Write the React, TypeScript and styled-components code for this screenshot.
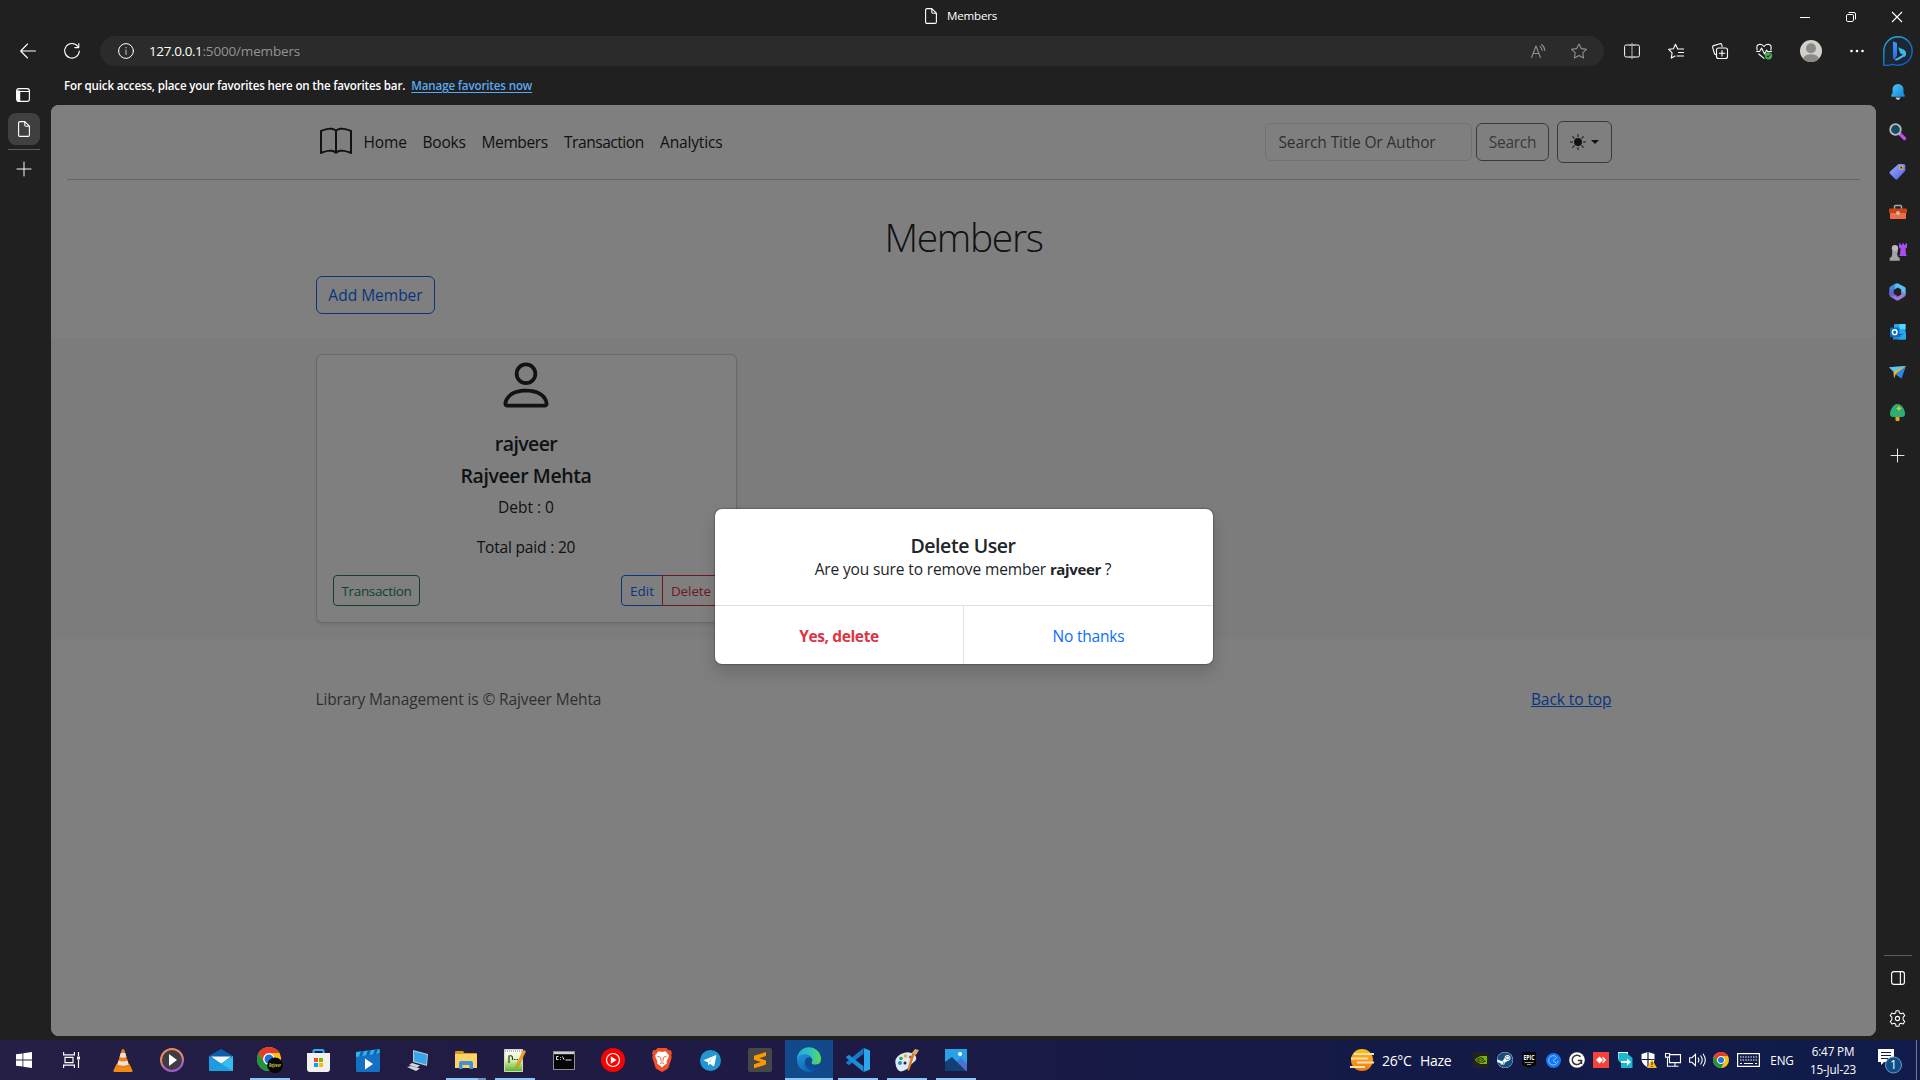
import React from "react";
import styled, { createGlobalStyle, css } from "styled-components";
import { BsBook, BsPerson, BsSunFill, BsStar } from "react-icons/bs";
import { FaSteam } from "react-icons/fa";
import { SiNvidia } from "react-icons/si";

const Global = createGlobalStyle`
  * { box-sizing: border-box; }
  body { margin: 0; background: #202020; font-family: "Open Sans", "Noto Sans", sans-serif; overflow: hidden; }
  svg { display: block; flex: none; overflow: visible; }
`;

/* ---------- window ---------- */
const Window = styled.div`
  width: 1920px; height: 1080px; display: flex; flex-direction: column;
  background: #202020; color: #fff; overflow: hidden; white-space: nowrap;
`;
const TitleBar = styled.header`
  height: 33px; display: grid; grid-template-columns: 925px 1fr auto; align-items: center;
`;
const WindowTitle = styled.div`
  grid-column: 2; display: flex; align-items: center; gap: 10px; padding-bottom: 1px;
  font-size: 11.6px; line-height: 16px; letter-spacing: -0.2px;
`;
const WindowControls = styled.div`
  display: flex; gap: 36px; padding-right: 18px; align-items: center;
`;
const Toolbar = styled.div`
  height: 36px; padding: 3px 7px 3px 20px; display: flex; align-items: center;
`;
const ToolGroup = styled.div<{ $gap: number; $right?: number }>`
  display: flex; align-items: center; gap: ${(p) => p.$gap}px; margin-right: ${(p) => p.$right ?? 0}px;
`;
const AddressBar = styled.div`
  width: 1504px; height: 30px; border-radius: 15px; background: #2b2b2b; flex: none;
  display: flex; align-items: center; padding: 0 17px 0 18px; margin-right: 20px;
`;
const Url = styled.div`
  flex: 1; margin-left: 15px; font-size: 13.5px; letter-spacing: -0.39px;
  span { color: #949494; letter-spacing: -0.16px; }
`;
const Body = styled.div`
  height: 971px; display: flex;
`;
const LeftRail = styled.nav`
  width: 51px; display: flex; flex-direction: column; align-items: flex-start; padding: 15px 0 0 8px;
`;
const RailItem = styled.div<{ $active?: boolean; $h?: number }>`
  width: 32px; height: ${(p) => p.$h ?? 32}px; border-radius: 8px; display: flex; align-items: center; justify-content: center;
  ${(p) => p.$active && css`background: #404040;`}
  &:first-child { margin-bottom: 7px; padding-right: 2px; }
`;
const RailRule = styled.div`
  width: 32px; height: 1px; background: #5c5c5c; margin: 4px 0 3px;
`;
const Center = styled.div`
  width: 1825px; display: flex; flex-direction: column;
`;
const FavoritesBar = styled.div`
  height: 36px; padding: 9px 13px 0; display: flex; gap: 6px; font-size: 11.6px; line-height: 16px; font-weight: 600; letter-spacing: -0.178px;
  a { color: #5aa9f0; text-decoration: underline; text-underline-offset: 2px; letter-spacing: -0.15px; }
`;
const RightRail = styled.nav`
  width: 44px; display: flex; flex-direction: column; align-items: center; padding: 3px 1px 2px 0;
`;
const RightItem = styled.div<{ $h?: number }>`
  height: ${(p) => p.$h ?? 40}px; display: flex; align-items: center; justify-content: center;
`;
const Spacer = styled.div`flex: 1;`;
const RightRule = styled.div`width: 28px; height: 1px; background: #5c5c5c; margin-bottom: 2px;`;

/* ---------- page ---------- */
const Page = styled.main`
  position: relative; height: 931px; border-radius: 8px; overflow: hidden; background: #fff; color: #212529;
  font-size: 15.5px; line-height: 24px; display: flex; flex-direction: column;
`;
const Container = styled.div`
  width: 1320px; margin: 0 auto; padding: 0 12px;
`;
const PageHeader = styled(Container)`
  height: 74px; display: flex; align-items: center; padding-left: 16px;
`;
const NavLink = styled.a<{ $track: number; $w: number }>`
  width: ${(p) => p.$w}px; letter-spacing: ${(p) => p.$track}px;
`;
const Nav = styled.nav`
  display: flex; gap: 16px; margin-left: 12px; flex: 1;
`;
const SearchField = styled.div`
  width: 207px; height: 38px; padding: 6px 12px 6px 13px; border: 1px solid #dee2e6; border-radius: 6px;
  color: rgba(33, 37, 41, 0.75); letter-spacing: -0.14px; margin-right: 4px;
`;
const Button = styled.button<{ $color: string; $small?: boolean; $track?: number; $w: number; $h?: number; $side?: "left" | "right" }>`
  width: ${(p) => p.$w}px; height: ${(p) => p.$h ?? (p.$small ? 31 : 38)}px; padding: ${(p) => (p.$small ? "1px 0 0 1px" : "0 0 0 1px")};
  display: flex; align-items: center; justify-content: center; gap: 5px;
  border: 1px solid ${(p) => p.$color}; border-radius: ${(p) => (p.$small ? 4 : 6)}px; background: transparent;
  color: ${(p) => p.$color}; font-family: inherit; font-size: ${(p) => (p.$small ? 13.5 : 15.5)}px; line-height: 21px;
  letter-spacing: ${(p) => p.$track ?? 0}px;
  ${(p) => p.$side === "left" && css`border-top-right-radius: 0; border-bottom-right-radius: 0;`}
  ${(p) => p.$side === "right" && css`border-top-left-radius: 0; border-bottom-left-radius: 0; margin-left: -1px;`}
`;
const ThemeButton = styled(Button)`margin-left: 8px; color: #212529;`;
const Caret = styled.i`
  border: 4.5px solid transparent; border-top-color: #212529; border-bottom: 0;
`;
const Rule = styled.div`height: 1px; margin: 0 16px; background: #c8c9ca; flex: none;`;
const Heading = styled.h1`
  margin: 33px 0 15px; text-align: center; font-weight: 300; font-size: 39px; line-height: 48px; letter-spacing: -1.35px;
`;
const Band = styled.section`
  height: 301px; margin-top: 24px; padding: 16px 0; background: #f8f9fa; flex: none;
`;
const Card = styled.article`
  width: 421px; height: 269px; display: flex; flex-direction: column; align-items: center; background: #fff;
  border: 1px solid rgba(0, 0, 0, 0.175); border-radius: 6px; box-shadow: 0 2px 4px rgba(0, 0, 0, 0.075);
`;
const CardTitle = styled.h5<{ $track: number }>`
  margin: 0 0 7px; padding-top: 1px; font-size: 19.5px; font-weight: 600; line-height: 24px; letter-spacing: ${(p) => p.$track}px;
`;
const CardBody = styled.div`
  width: 100%; padding: 16px; display: flex; flex-direction: column; align-items: center;
`;
const CardText = styled.p<{ $track?: number }>`
  margin: 0 0 16px; letter-spacing: ${(p) => p.$track ?? 0}px;
`;
const CardActions = styled.div`
  width: 100%; display: flex; justify-content: space-between;
`;
const ButtonGroup = styled.div`display: flex;`;
const Footer = styled(Container)`
  padding-top: 48px; display: flex; justify-content: space-between; color: rgba(33, 37, 41, 0.75); letter-spacing: -0.13px;
  a { color: #0d6efd; text-decoration: underline; letter-spacing: -0.08px; }
`;
const Backdrop = styled.div`
  position: absolute; inset: 0; background: rgba(0, 0, 0, 0.5);
`;
const Dialog = styled.div`
  position: absolute; left: 664px; top: 404px; width: 498px; height: 155px; display: flex; flex-direction: column;
  background: #fff; border-radius: 7px; box-shadow: 0 0 1px 1px rgba(0, 0, 0, 0.2), 0 8px 16px rgba(0, 0, 0, 0.17);
`;
const DialogBody = styled.div`
  height: 97px; padding: 25px 2px 22px 0; text-align: center; border-bottom: 1px solid #dee2e6; letter-spacing: -0.14px; line-height: 23px;
  b { font-size: 15px; letter-spacing: -0.36px; }
`;
const DialogTitle = styled.h5`
  margin: 0; font-size: 19.5px; line-height: 24px; font-weight: 600; letter-spacing: -0.42px;
`;
const DialogActions = styled.div`
  flex: 1; display: grid; grid-template-columns: 1fr 1fr; align-items: stretch;
`;
const DialogAction = styled.div<{ $danger?: boolean }>`
  display: flex; align-items: center; justify-content: center; padding-top: 1px;
  color: ${(p) => (p.$danger ? "#dc3545" : "#0d6efd")}; font-weight: ${(p) => (p.$danger ? 700 : 400)};
  letter-spacing: ${(p) => (p.$danger ? -0.38 : -0.2)}px;
  ${(p) => p.$danger && css`border-right: 1px solid #dee2e6;`}
`;

/* ---------- taskbar ---------- */
const Taskbar = styled.footer`
  height: 40px; display: flex; align-items: center;
  background: linear-gradient(90deg, #251f46 0%, #201c43 22%, #1c1a45 45%, #131a48 75%, #111c4a 100%);
`;
const System = styled.div`display: flex; margin-right: 3px;`;
const Apps = styled.div`display: flex; gap: 1px; flex: 1;`;
const App1 = styled.div<{ $state?: "open" | "stack" | "active" }>`
  width: 48px; height: 40px; display: grid; place-items: center; border-bottom: 2px solid transparent;
  padding: 2px 1px 0 0;
  ${(p) => p.$state === "active" && css`background: #11498b; border-bottom-color: #8fc5f5;`}
  ${(p) => p.$state === "open" && css`background: linear-gradient(#8fc5f5, #8fc5f5) 4px 38px / 40px 2px no-repeat border-box;`}
  ${(p) => p.$state === "stack" && css`background: linear-gradient(90deg, #8fc5f5 32px, #6f92b8 32px) 4px 38px / 40px 2px no-repeat border-box;`}
`;
const Weather = styled.div`
  display: flex; align-items: center; width: 119px; font-size: 14px; letter-spacing: -0.3px;
  span:nth-of-type(1) { width: 38px; margin-left: 8px; letter-spacing: -0.35px; }
`;
const TrayIcon = styled.div<{ $w?: number }>`
  width: ${(p) => p.$w ?? 24}px; display: flex; justify-content: center;
`;
const TrayText = styled.div<{ $w: number }>`
  width: ${(p) => p.$w}px; text-align: center; font-size: 11.7px; line-height: 18px; letter-spacing: -0.15px; padding-bottom: 1px;
`;
const ShowDesktop = styled.div`width: 4px; height: 40px; border-left: 1px solid #6d7693;`;

/* ---------- line icons ---------- */
type LineProps = { s?: number; c?: string; w?: number; children: React.ReactNode };
const Line = ({ s = 16, c = "#fff", w = 1.1, children }: LineProps) => (
  <svg width={s} height={s} viewBox="0 0 16 16" fill="none" stroke={c} strokeWidth={w} strokeLinecap="round" strokeLinejoin="round">{children}</svg>
);
const DocIcon = () => (
  <svg width="12" height="16" viewBox="0 0 12 16" fill="none" stroke="#fff" strokeWidth="1.1" strokeLinejoin="round">
    <path d="M2 .6h4.8L11.4 5.2V14a1.4 1.4 0 0 1-1.4 1.4H2A1.4 1.4 0 0 1 .6 14V2A1.4 1.4 0 0 1 2 .6zM6.8 .6V4a1.2 1.2 0 0 0 1.2 1.2h3.4" />
  </svg>
);
const BingIcon = () => (
  <svg width="30" height="30" viewBox="0 0 30 30">
    <defs>
      <linearGradient id="bo" x1="0" y1="0" x2="0.6" y2="1"><stop stopColor="#22b4cf" /><stop offset="1" stopColor="#1557cf" /></linearGradient>
      <linearGradient id="bb" x1="0" y1="0" x2="0" y2="1"><stop stopColor="#3b9cf5" /><stop offset="1" stopColor="#2467e8" /></linearGradient>
      <linearGradient id="bt" x1="1" y1="0" x2="0" y2="1"><stop stopColor="#37e0d8" /><stop offset="1" stopColor="#2f8ff5" /></linearGradient>
    </defs>
    <path d="M15 .8A14.2 14.2 0 1 1 10 28.3Q5 29.7.8 29.2V15A14.2 14.2 0 0 1 15 .8z" fill="#1b2733" stroke="url(#bo)" strokeWidth="1.4" />
    <path d="M10 5.5l4 1.5v12.2l-2.4 4.6q-1.6-.7-1.6-2.6z" fill="url(#bb)" />
    <path d="M15.3 11.3l6 2.7q2 1.3 1.7 4-.4 1.9-1.8 3.2-.2-2.2-2.2-2.9l-2-1z" fill="url(#bt)" />
    <path d="M11.5 23.8q1.6 1.2 3.6.2l6-3.4q1.8-1 1.8-3-.8.8-2.3 1l-5.4 2.8q-1.5.7-3.7 2.4z" fill="#4db6f5" />
  </svg>
);

/* ---------- sidebar icons ---------- */
const BellIcon = () => (
  <svg width="16" height="18" viewBox="0 0 16 18">
    <defs><linearGradient id="be" x2="1" y2="1"><stop stopColor="#4cc8f7" /><stop offset="1" stopColor="#1583d8" /></linearGradient></defs>
    <path d="M8 1a5.4 5.4 0 0 1 5.5 5.4V10l1.3 2.6c.3.7 0 1.2-.7 1.2H1.9c-.7 0-1-.5-.7-1.2L2.5 10V6.4A5.4 5.4 0 0 1 8 1z" fill="url(#be)" />
    <path d="M5.500 14.600h5Q9.800 17 8 17t-2.500-2.400z" fill="#c8c8c8" />
  </svg>
);
const LensIcon = () => (
  <svg width="17" height="17" viewBox="0 0 17 17">
    <path d="M11 11l4.500 4.500" stroke="#c44af0" strokeWidth="3.200" strokeLinecap="round" />
    <circle cx="6.500" cy="6.500" r="5.300" fill="#144a68" stroke="#b9b9b9" strokeWidth="1.800" />
  </svg>
);
const TagIcon = () => (
  <svg width="17" height="17" viewBox="0 0 17 17">
    <defs><linearGradient id="tg" x2="1" y2="1"><stop stopColor="#8fb6ff" /><stop offset="1" stopColor="#5a55e8" /></linearGradient></defs>
    <path d="M9.500 1h5a1.800 1.800 0 0 1 1.800 1.800v5L8.500 16a1.600 1.600 0 0 1-2.300 0L1 10.800a1.600 1.600 0 0 1 0-2.300z" fill="url(#tg)" />
    <circle cx="12.300" cy="4.700" r="1.700" fill="#32307c" stroke="#f3b91b" strokeWidth="1.100" />
  </svg>
);
const ToolboxIcon = () => (
  <svg width="18" height="16" viewBox="0 0 18 16">
    <path d="M5.500 5V2.500Q5.500 1.500 6.500 1.500h5q1 0 1 1V5" fill="none" stroke="#a9a9a9" strokeWidth="1.500" />
    <rect x="1" y="8" width="16" height="7" rx="1" fill="#ef6c47" />
    <rect x="0" y="4.500" width="18" height="4.500" rx="1" fill="#c94318" />
    <circle cx="9" cy="9" r="2" fill="#bdbdbd" />
  </svg>
);
const ChessIcon = () => (
  <svg width="18" height="18" viewBox="0 0 18 18">
    <path d="M10 .5h1.800v1.500h1.300V.5h1.900v1.500h1.200V.5H18v4l-1.500 1 .4 5.500.8 2h-7.400l.8-2 .4-5.500-1.500-1z" fill="#a94df2" />
    <circle cx="6" cy="5.300" r="3.200" fill="#b9b9b9" />
    <path d="M3 8h6v1.500H8l.7 4 2 1.500v2.700H.7V15l2-1.500.7-4H3z" fill="#a2a2a2" />
  </svg>
);
const M365Icon = () => (
  <svg width="17" height="18" viewBox="0 0 17 18">
    <path d="M5.800 1.300L8.700.2l7 3.700q1 .7 1 2v5.800l-4.500-3V6.600L8.800 4.500l-3 1.800z" fill="#55c3f0" />
    <path d="M8.700.2L6 1.500v4.800l-1.500.8v4.500l-2 1.700L.4 11.500V5.200q0-1.200 1-1.800L6.500.5q1.200-.6 2.200-.3z" fill="#4b83dc" />
    <path d="M.4 10.500q0 2.500 1.500 3.400l5.300 3.300q1.200.8 2.500 0l5.700-3.400q1.500-1 1.300-3.200l-4.500-2v2.800l-3.700 2.300-4-2.400z" fill="#9b7bd6" />
    <path d="M.4 8.500v3q.5 2.300 2.600 2l5.500-.6-4-2.300V7z" fill="#6a62d2" />
  </svg>
);
const OutlookIcon = () => (
  <svg width="16" height="16" viewBox="0 0 16 16">
    <rect x="4" y="0" width="11.500" height="10" rx="1" fill="#28a8ea" /><rect x="9.500" y="0" width="6" height="5" fill="#50d9ff" />
    <path d="M3 15.500V9l6 2.500L16 8v6.500q0 1-1 1z" fill="#1490df" /><path d="M8 15.500L16 8v6.500q0 1-1 1z" fill="#28a8ea" />
    <rect x="0" y="3.500" width="9.500" height="9.500" rx="1" fill="#0f6cbd" />
    <ellipse cx="4.700" cy="8.200" rx="2.300" ry="2.400" fill="none" stroke="#fff" strokeWidth="1.400" />
  </svg>
);
const DropIcon = () => (
  <svg width="17" height="13" viewBox="0 0 17 13">
    <path d="M0 1.200L17 0 12.500 12.500 8 9.500z" fill="#2b86e8" /><path d="M0 1.200L17 0 5 6z" fill="#58c8f2" />
    <path d="M4.500 5.800L17 0 7 7.500 5 12.500z" fill="#f6b91a" />
  </svg>
);
const TreeIcon = () => (
  <svg width="15" height="17" viewBox="0 0 15 17">
    <rect x="5.500" y="12" width="4" height="5" rx=".8" fill="#e8a11a" />
    <path d="M7.500 0C12 0 15 6 15 9.500S13 13 11 13H4c-2 0-4-.5-4-3.500S3 0 7.500 0z" fill="#2aae75" />
    <path d="M9 1.500l.9 2 2 .9-2 .9-.9 2-.9-2-2-.9 2-.9z" fill="#f6c12d" />
  </svg>
);

/* ---------- app icons ---------- */
const ChromeArt = () => (
  <>
    <circle cx="12" cy="12" r="12" fill="#fbc116" />
    <path d="M1.600 6A12 12 0 0 1 22.400 6H12a6 6 0 0 0-5.200 9z" fill="#e33b2e" />
    <path d="M1.600 6l5.200 9A6 6 0 0 0 17.200 15L12 24A12 12 0 0 1 1.600 6z" fill="#229342" />
    <circle cx="12" cy="12" r="5.700" fill="#fff" /><circle cx="12" cy="12" r="4.500" fill="#1a73e8" />
  </>
);
const ChromeIcon = () => <svg width="16" height="16" viewBox="0 0 24 24"><ChromeArt /></svg>;
const ProfileChromeIcon = () => (
  <svg width="26" height="26" viewBox="0 0 26 26">
    <ChromeArt />
    <circle cx="18" cy="18.300" r="7.800" fill="#050505" />
    <text x="18" y="20" fontSize="4.500" fontStyle="italic" fontWeight="700" textAnchor="middle" fill="#c4c832" textLength="12" lengthAdjust="spacingAndGlyphs">Rajveer</text>
  </svg>
);
const WindowsIcon = () => (
  <svg width="16" height="16" viewBox="0 0 16 16" fill="#fff"><path d="M0 2.300L6.500 1.400v6.200H0zM7.300 1.300L16 0v7.600H7.300zM0 8.400h6.500v6.200L0 13.700zM7.300 8.400H16V16l-8.700-1.300z" /></svg>
);
const TaskViewIcon = () => (
  <svg width="17" height="16" viewBox="0 0 17 16" fill="none" stroke="#fff" strokeWidth="1.200">
    <path d="M.6 0v2.900h10.800V0M.6 16v-2.900h10.800V16M2 5.300h8v5.400H2zM15.500 0v4M15.500 8v8" /><path d="M14 4.500h3v3h-3z" fill="#fff" stroke="none" />
  </svg>
);
const VlcIcon = () => (
  <svg width="20" height="23" viewBox="0 0 20 23">
    <path d="M3.500 15h13l3 6.500q.3 1.500-1 1.500h-17q-1.300 0-1-1.500z" fill="#f08a12" />
    <path d="M10 0q1 0 1.400 1.200L16.300 17q-6.300 3.500-12.600 0L8.600 1.200Q9 0 10 0z" fill="#f57c0c" />
    <path d="M7.700 4h4.600l1.100 4q-3.400 1.500-6.800 0zM5.500 11.500q4.500 2 9 0l1.200 4q-5.700 2.500-11.400 0z" fill="#e4e4e4" />
  </svg>
);
const PlayerIcon = () => (
  <svg width="24" height="24" viewBox="0 0 24 24">
    <defs><linearGradient id="pl" x2="0.3" y2="1"><stop stopColor="#f58a4b" /><stop offset=".5" stopColor="#e08a70" /><stop offset="1" stopColor="#a05bd0" /></linearGradient></defs>
    <circle cx="12" cy="12" r="11" fill="#3f3b44" stroke="url(#pl)" strokeWidth="2" /><path d="M9 6l8 6-8 6z" fill="#fff" />
  </svg>
);
const MailIcon = () => (
  <svg width="24" height="22" viewBox="0 0 24 22">
    <path d="M0 7L12 0l12 7v6H0z" fill="#0a5fae" /><path d="M2 7.500h20L12 15z" fill="#f4f4f4" />
    <path d="M0 7l12 7.500L0 22z" fill="#1c9be0" /><path d="M24 7v15H0z" fill="#35bdf2" /><path d="M12 14.500L24 22H0z" fill="#1f9fe2" />
  </svg>
);
const StoreIcon = () => (
  <svg width="23" height="23" viewBox="0 0 23 23">
    <path d="M6.500 5V2q0-1 1-1h8q1 0 1 1v3" fill="none" stroke="#29b1f0" strokeWidth="2" />
    <path d="M0 4h23v16q0 3-3 3H3q-3 0-3-3z" fill="#f1f1f1" />
    <path d="M7 9h4v4H7z" fill="#f25022" /><path d="M12 9h4v4h-4z" fill="#7fba00" /><path d="M7 14h4v4H7z" fill="#00a4ef" /><path d="M12 14h4v4h-4z" fill="#ffb900" />
  </svg>
);
const MoviesIcon = () => (
  <svg width="24" height="23" viewBox="0 0 24 23">
    <rect y="4" width="24" height="19" rx="1.500" fill="#1570c4" /><path d="M0 3L23.500 0 24 4 0 8z" fill="#2bb4ef" /><path d="M5 2.500l3-.4L6 7l-3 .4zM12 1.500l3-.4L13 6l-3 .4zM19 .6l3-.4L20 5l-3 .4z" fill="#0f5ba8" />
    <path d="M9 9.500l8 5.500-8 5.500z" fill="#fff" />
  </svg>
);
const RemoteIcon = () => (
  <svg width="22" height="21" viewBox="0 0 22 21">
    <path d="M7 0l15 4-1 12-14-4z" fill="#b9c4d0" /><path d="M8 1.500l13 3.300-.8 9.700-12-3.500z" fill="#35a5f0" />
    <path d="M6 13l8 2.500-3 2L3 15zM1 17l4-1 9 2.500-4 2.500z" fill="#d3d8de" />
  </svg>
);
const ExplorerIcon = () => (
  <svg width="22" height="18" viewBox="0 0 22 18">
    <path d="M0 1q0-1 1-1h7l1.500 2H21q1 0 1 1v14H0z" fill="#d99a1c" /><path d="M0 3h22v14H0z" fill="#fdd267" />
    <path d="M4 18v-6q0-2 2-2h10q2 0 2 2v6h-3.500v-4h-7v4z" fill="#3d93d8" />
  </svg>
);
const NotepadIcon = () => (
  <svg width="22" height="23" viewBox="0 0 22 23">
    <defs><linearGradient id="np" x2="0" y2="1"><stop stopColor="#fff" /><stop offset=".45" stopColor="#e3f3b8" /><stop offset="1" stopColor="#55b41c" /></linearGradient></defs>
    <path d="M.5.5h18v22H.5z" fill="url(#np)" stroke="#d6d6d6" /><path d="M1 2h17" stroke="#777" strokeDasharray="1 1" /><path d="M5 14V7q3.500-1 3.500 2v2M10 10.500h1.500M12.500 10.500h1.500" stroke="#333" fill="none" strokeWidth="1.200" />
    <path d="M19.500 1l2.500 1.300-7.500 15L12 19l.3-3z" fill="#efa524" stroke="#9a6a18" strokeWidth=".4" />
  </svg>
);
const TerminalIcon = () => (
  <svg width="22" height="19" viewBox="0 0 22 19">
    <rect x=".5" y=".5" width="21" height="18" fill="#050505" stroke="#8f8f8f" /><path d="M1 1h20v2.200H1z" fill="#d0d0d0" />
    <path d="M5.500 5.500H3.500v3h2M7.500 6v.8M7.500 8v.8M9.500 5.500l1.500 3.300M12.500 9h6" stroke="#e6e6e6" fill="none" />
  </svg>
);
const MusicIcon = () => (
  <svg width="24" height="24" viewBox="0 0 24 24"><circle cx="12" cy="12" r="12" fill="#f80303" /><circle cx="12" cy="12" r="6.500" fill="none" stroke="#fff" strokeWidth="1.200" /><path d="M9.800 8.300l5.800 3.700-5.800 3.700z" fill="#fff" /></svg>
);
const BraveIcon = () => (
  <svg width="20" height="24" viewBox="0 0 20 24">
    <path d="M5.500 0h9l2 2.300L18.500 2 20 5l-.8 2 .5 2.500-3 9.500q-.5 1.400-1.700 2.200L10 24l-5-2.800q-1.200-.8-1.700-2.200L.3 9.500.8 7 0 5l1.500-3 2 .3z" fill="#f2502a" />
    <path d="M10 4l3.500-.8L17 7.500l-1 3-1.500 3 .5 2-3 2-2 2-2-2-3-2 .5-2L4 10.500l-1-3 3.500-4.300z" fill="#fff" />
    <path d="M5.500 8.500l2.800.6M14.500 8.500l-2.800.6M8.500 9.500l.7 4M11.500 9.500l-.7 4M8 15.700L10 14.500l2 1.200" stroke="#f2502a" strokeWidth=".9" fill="none" />
  </svg>
);
const TelegramIcon = () => (
  <svg width="21" height="21" viewBox="0 0 21 21"><circle cx="10.500" cy="10.500" r="10.500" fill="#2197cf" /><path d="M3.500 10.200l12-5q1-.2.8 1L14.300 15.500q-.3 1-1.300.5L10 13.800l-1.700 1.700-.5-3.300z" fill="#fff" /><path d="M7.800 12.200l6-5.400-4.500 6z" fill="#b5d8ea" /></svg>
);
const SublimeIcon = () => (
  <svg width="24" height="24" viewBox="0 0 24 24"><rect width="24" height="24" rx="2" fill="#474747" /><path d="M18 4v4l-7 2.200 7 2.300v4L6 20.300v-4l7-2.200-7-2.300V7.800z" fill="#ff9800" /></svg>
);
const EdgeIcon = () => (
  <svg width="24" height="24" viewBox="0 0 24 24">
    <defs>
      <linearGradient id="e1" x2="1" y2="0"><stop stopColor="#2aa8e0" /><stop offset=".6" stopColor="#2fc6b8" /><stop offset="1" stopColor="#62d84e" /></linearGradient>
      <linearGradient id="e2" x2=".7" y2="1"><stop stopColor="#2295dd" /><stop offset="1" stopColor="#0d5cae" /></linearGradient>
    </defs>
    <path d="M0 11.500A12 12 0 0 1 24 11q.2 5-5 5.500-5 .3-4.200-2 1.500-2.500-.3-4.500Q8 4 0 11.500z" fill="url(#e1)" />
    <path d="M0 12Q1 6 7.500 6q5 0 7.200 4-4-2-6.200 1.500Q7 18 13 20q5 1.300 9.500-1.600Q18.500 24 12 24 1 23.500 0 12z" fill="url(#e2)" />
    <path d="M8.800 11.500Q6.800 13.500 8.500 18q2.500 4.500 8 5 4-1.500 6-4.600-4.500 2-8.500.8-5.500-2-5.200-7.700z" fill="#0c4f9c" />
  </svg>
);
const CodeIcon = () => (
  <svg width="24" height="24" viewBox="0 0 24 24"><path d="M17.500 0v5.800L3 17.200.5 15.500q-.8-.7 0-1.500z" fill="#1579c4" /><path d="M17.500 24v-5.800L3 6.800.5 8.500q-.8.700 0 1.500z" fill="#1b8cd8" /><path d="M17.500 0L24 2.500v19L17.500 24q.8-1 .5-2V2q.2-1-.5-2z" fill="#2ba6ee" /></svg>
);
const PaintIcon = () => (
  <svg width="24" height="23" viewBox="0 0 24 23">
    <path d="M1 17Q-2 9 6 5t14 1q3 4-1 7t-5 5-6 4-7-5z" fill="#dcebf5" />
    <circle cx="5" cy="14" r="2" fill="#2f8bd0" /><circle cx="6" cy="9.500" r="1.800" fill="#37a34a" /><circle cx="10.500" cy="7" r="1.800" fill="#efb01d" /><circle cx="10" cy="14" r="1.500" fill="#1c2550" /><circle cx="15.500" cy="8" r="1.600" fill="#dd4337" />
    <path d="M20 4l-5.500 17q-2 2-2-1L17.500 3z" fill="#d9792b" /><path d="M17 4L20 0l4 1-3 5z" fill="#d8ad72" />
  </svg>
);
const PhotosIcon = () => (
  <svg width="22" height="22" viewBox="0 0 22 22"><path d="M0 0h22v22H0z" fill="#27a2e6" /><path d="M12 12l4-3 6 6v7H12z" fill="#4f70cf" /><path d="M0 13l7-5 14 14H0z" fill="#123f75" /><circle cx="15" cy="5" r="2" fill="#fff" /></svg>
);

/* ---------- tray icons ---------- */
const HazeIcon = () => (
  <svg width="24" height="22" viewBox="0 0 24 22">
    <defs><linearGradient id="hz" x2="0" y2="1"><stop stopColor="#fcc21b" /><stop offset="1" stopColor="#f0761a" /></linearGradient></defs>
    <circle cx="12" cy="11" r="11" fill="url(#hz)" /><path d="M4 5h20M1 9.500h17M7 13.500h17M0 18h15" stroke="#f7dfae" strokeWidth="1.900" />
  </svg>
);
const NvidiaBadge = styled.div`
  width: 16px; height: 16px; background: #222; display: grid; place-items: center;
`;
const NvidiaTray = () => <NvidiaBadge><SiNvidia size={12} color="#76b900" /></NvidiaBadge>;
const SteamBadge = styled.div`
  width: 16px; height: 16px; border-radius: 50%; background: #fff; display: grid; place-items: center;
`;
const SteamTray = () => <SteamBadge><FaSteam size={16} color="#14507c" /></SteamBadge>;
const EpicTray = () => (
  <svg width="14" height="16" viewBox="0 0 14 16"><path d="M0 0h14v13l-7 3-7-3z" fill="#080808" /><text x="7" y="8" fontSize="7.500" fontWeight="700" textAnchor="middle" fill="#fff" textLength="11" lengthAdjust="spacingAndGlyphs">EPIC</text><path d="M2.500 10.500h9M5 12.500h4" stroke="#aaa" strokeWidth=".9" /></svg>
);
const BlueTray = () => (
  <svg width="15" height="15" viewBox="0 0 15 15"><circle cx="7.500" cy="7.500" r="7.500" fill="#1677f0" /><path d="M10 3.500A4.700 4.700 0 1 0 12 8M11.500 4L7 7.500l3 2.500" fill="none" stroke="#8cc4ff" /></svg>
);
const GTray = () => (
  <svg width="16" height="16" viewBox="0 0 16 16"><circle cx="8" cy="8" r="7.800" fill="#fff" /><path d="M11.500 4.800A4.700 4.700 0 1 0 12.600 8.500H8.800M12.500 8.500v3.500" fill="none" stroke="#333" strokeWidth="1.500" /></svg>
);
const RedTray = () => (
  <svg width="16" height="16" viewBox="0 0 16 16"><path d="M0 0h16v16H0z" fill="#f5433b" /><path d="M6.500 4.500L10 8l-3.500 3.500L3 8z" fill="#fff" /><path d="M10 4.800L13.200 8 10 11.200l-1-1L11 8 9 5.800z" fill="#fff" /></svg>
);
const CyanTray = () => (
  <svg width="16" height="16" viewBox="0 0 16 16"><path d="M1 0h10v10H5L1 7z" fill="#efffff" /><path d="M1.500 1h8l6 5v10H4V11L1.500 9z" fill="#18b9cf" /><path d="M4 9h6V6.500L14 10l-4 3.500V11H4z" fill="#fff" /></svg>
);
const ShieldTray = () => (
  <svg width="16" height="16" viewBox="0 0 16 16"><path d="M7 0l6.500 2v5.500Q13 12.500 7 15.500 1 12.500.5 7.500V2z" fill="#fff" /><path d="M7 0v15.500M.5 7.500h13" stroke="#111c4a" strokeWidth="1.200" /><path d="M11 7l5 9H6z" fill="#f7b916" /><path d="M11 10v3M11 14v1" stroke="#222" /></svg>
);
const NetworkTray = () => (
  <svg width="16" height="14" viewBox="0 0 16 14" fill="none" stroke="#fff" strokeWidth="1.100"><path d="M4.500 1.600h11v8h-11zM10 9.600v3.500M6.500 13.300h7" /><path d="M.5.5h4v3.600h-4z" fill="#121b4a" /><path d="M2.500 4.500v8.800h4" /></svg>
);
const VolumeTray = () => (
  <svg width="17" height="14" viewBox="0 0 17 14" fill="none" stroke="#fff" strokeWidth="1.100"><path d="M.6 4.700H3L6.500 1.300v11.400L3 9.300H.6zM9 4.500q1.800 2.500 0 5M11.500 2.500q3.400 4.500 0 9M14 .7q4.600 6.300 0 12.600" /></svg>
);
const KeyboardTray = () => (
  <svg width="23" height="14" viewBox="0 0 23 14" fill="none" stroke="#fff"><rect x=".6" y=".6" width="21.800" height="12.800" strokeWidth="1.200" /><path d="M3 4h17M3 7h17" strokeWidth="1.200" strokeDasharray="1.500 1.100" /><path d="M3 10.500h2M7 10.500h9M18 10.500h2" strokeWidth="1.200" /></svg>
);
const NotificationIcon = () => (
  <svg width="25" height="28" viewBox="0 0 25 28">
    <path d="M0 3h16v13H6l-3 3v-3H0z" fill="#fff" /><path d="M3 6.500h10M3 9.500h10M3 12.500h7" stroke="#111c4a" strokeWidth="1.200" />
    <circle cx="15.500" cy="19" r="8" fill="#0f4f88" stroke="#6c9cc4" /><text x="15.500" y="23.300" fontSize="12" textAnchor="middle" fill="#fff">1</text>
  </svg>
);

const apps: { Icon: React.FC; state?: "open" | "stack" | "active" }[] = [
  { Icon: VlcIcon }, { Icon: PlayerIcon }, { Icon: MailIcon }, { Icon: ProfileChromeIcon, state: "open" }, { Icon: StoreIcon },
  { Icon: MoviesIcon }, { Icon: RemoteIcon }, { Icon: ExplorerIcon, state: "stack" }, { Icon: NotepadIcon, state: "open" },
  { Icon: TerminalIcon }, { Icon: MusicIcon }, { Icon: BraveIcon }, { Icon: TelegramIcon }, { Icon: SublimeIcon },
  { Icon: EdgeIcon, state: "active" }, { Icon: CodeIcon, state: "open" }, { Icon: PaintIcon, state: "open" }, { Icon: PhotosIcon, state: "open" },
];
const sidebar: React.FC[] = [TagIcon, ToolboxIcon, ChessIcon, M365Icon, OutlookIcon, DropIcon, TreeIcon];
const tray: React.FC[] = [NvidiaTray, SteamTray, EpicTray, BlueTray, GTray, RedTray, CyanTray, ShieldTray, NetworkTray, VolumeTray, ChromeIcon];
const links = [
  { label: "Home", track: -0.1, w: 43 }, { label: "Books", track: -0.2, w: 43 }, { label: "Members", track: -0.38, w: 66.5 },
  { label: "Transaction", track: -0.45, w: 80 }, { label: "Analytics", track: -0.15, w: 64 },
];

export default function App() {
  return (
    <Window>
      <Global />
      <TitleBar>
        <WindowTitle><DocIcon /><span>Members</span></WindowTitle>
        <WindowControls>
          <svg width="10" height="10" viewBox="0 0 10 10"><path d="M0 5.500h10" stroke="#fff" /></svg>
          <svg width="10" height="10" viewBox="0 0 10 10" fill="none" stroke="#fff"><rect x=".5" y="2.500" width="7" height="7" rx="1.300" /><path d="M2.500.5H8Q9.500.5 9.500 2v5.500" /></svg>
          <svg width="10" height="10" viewBox="0 0 10 10"><path d="M0 0l10 10M10 0L0 10" stroke="#fff" strokeWidth="1.100" /></svg>
        </WindowControls>
      </TitleBar>
      <Toolbar>
        <ToolGroup $gap={28} $right={20}>
          <Line><path d="M15.500 8H.7M7.500 1L.7 8l6.800 7" /></Line>
          <Line><path d="M13.800 3.300A7.300 7.300 0 1 0 15.300 8M14.800.6v4h-4" /></Line>
        </ToolGroup>
        <AddressBar>
          <Line w={1}><circle cx="8" cy="8" r="7.400" /><path d="M8 7v4.500M8 4.400v.4" stroke="#ccc" /></Line>
          <Url>127.0.0.1<span>:5000/members</span></Url>
          <ToolGroup $gap={24}>
            <Line c="#8f8f8f"><path d="M.6 14.500L5 3l4.400 11.500M2.200 10.500h5.600M9 3.500q2 1.500 2 4M10.500 1.500q3 2 3.300 6" /></Line>
            <BsStar size={16} color="#8f8f8f" />
          </ToolGroup>
        </AddressBar>
        <ToolGroup $gap={28}>
          <Line w={1}><path d="M6 2H2.200Q.6 2 .6 3.600v8.800Q.6 14 2.200 14H6M10 2h3.800q1.600 0 1.600 1.600v8.800q0 1.600-1.600 1.600H10M6 2h4M6 14h4" /><path d="M8 .3v15.400" stroke="#bbb" /></Line>
          <Line><path d="M9.700 6L7.500 1.300 5.400 5.700.7 6.400l3.400 3.400-.8 5.300 3.700-2M10 6h5.600M10.500 9.500h5.100M9 13h6.600" /></Line>
          <Line><path d="M4.500 12L2.600 11 .6 4.300Q.5 3 1.700 2.600L8 .7q1.300-.2 1.700 1l.5 1.800M6.500 5h7q2 0 2 2v6.500q0 2-2 2h-7q-2 0-2-2V7q0-2 2-2zM10 7.500v5.600M7.200 10.300h5.600" /></Line>
          <Line w={1.1}><path d="M1.200 7Q-.3 1.500 4 1.200q2.500 0 4 2.300 1.500-2.300 4-2.300Q16.300 1.500 14.800 7M.6 8.500h3l2-3.500 3 6 2-4 1 1.500h4M2.800 11L8 15.300" /><circle cx="12.500" cy="12.800" r="3.600" fill="#4caf50" stroke="none" /><path d="M11 13l1.200 1 2-2.500" stroke="#173d19" /></Line>
          <svg width="22" height="22" viewBox="0 0 22 22"><defs><clipPath id="av"><circle cx="11" cy="11" r="11" /></clipPath></defs><g clipPath="url(#av)"><path d="M0 0h22v22H0z" fill="#d3d0cc" /><circle cx="11" cy="8.300" r="5" fill="#8d8984" /><ellipse cx="11" cy="19" rx="7.800" ry="4.800" fill="#8d8984" /></g></svg>
          <svg width="14" height="4" viewBox="0 0 14 4" fill="#fff"><circle cx="1.500" cy="2" r="1.300" /><circle cx="7" cy="2" r="1.300" /><circle cx="12.500" cy="2" r="1.300" /></svg>
        </ToolGroup>
        <Spacer />
        <BingIcon />
      </Toolbar>
      <Body>
        <LeftRail>
          <RailItem $h={22}><Line s={14} w={1.3}><rect x=".7" y=".7" width="14.600" height="14.600" rx="2.500" /><path d="M1 4h14" /><path d="M1.200 3.500h3v11.500h-2z" fill="#fff" /></Line></RailItem>
          <RailItem $active><DocIcon /></RailItem>
          <RailRule />
          <RailItem><Line s={14}><path d="M8 0v16M0 8h16" /></Line></RailItem>
        </LeftRail>
        <Center>
          <FavoritesBar><span>For quick access, place your favorites here on the favorites bar.</span><a>Manage favorites now</a></FavoritesBar>
          <Page>
            <PageHeader>
              <BsBook size={32} />
              <Nav>{links.map((l) => <NavLink key={l.label} $track={l.track} $w={l.w}>{l.label}</NavLink>)}</Nav>
              <SearchField>Search Title Or Author</SearchField>
              <Button $color="#6c757d" $w={73} $track={-0.27}>Search</Button>
              <ThemeButton $color="#6c757d" $w={55} $h={42}><BsSunFill size={16} /><Caret /></ThemeButton>
            </PageHeader>
            <Rule />
            <Container>
              <Heading>Members</Heading>
              <Button $color="#0d6efd" $w={119}>Add Member</Button>
            </Container>
            <Band>
              <Container>
                <Card>
                  <BsPerson size={60} />
                  <CardBody>
                    <CardTitle $track={-0.6}>rajveer</CardTitle>
                    <CardTitle $track={-0.4}>Rajveer Mehta</CardTitle>
                    <CardText>Debt : 0</CardText>
                    <CardText $track={-0.18}>Total paid : 20</CardText>
                    <CardActions>
                      <Button $small $color="#198754" $w={87} $track={-0.34}>Transaction</Button>
                      <ButtonGroup>
                        <Button $small $color="#0d6efd" $w={42} $side="left">Edit</Button>
                        <Button $small $color="#dc3545" $w={58} $side="right" $track={-0.1}>Delete</Button>
                      </ButtonGroup>
                    </CardActions>
                  </CardBody>
                </Card>
              </Container>
            </Band>
            <Footer><span>Library Management is © Rajveer Mehta</span><a>Back to top</a></Footer>
            <Backdrop />
            <Dialog>
              <DialogBody>
                <DialogTitle>Delete User</DialogTitle>
                Are you sure to remove member <b>rajveer</b> ?
              </DialogBody>
              <DialogActions>
                <DialogAction $danger>Yes, delete</DialogAction>
                <DialogAction>No thanks</DialogAction>
              </DialogActions>
            </Dialog>
          </Page>
        </Center>
        <RightRail>
          <RightItem $h={40}><BellIcon /></RightItem>
          <RightItem $h={39}><LensIcon /></RightItem>
          <RightItem $h={41}><TagIcon /></RightItem>
          {sidebar.slice(1).map((Icon, i) => <RightItem key={i}><Icon /></RightItem>)}
          <RightItem $h={46}><Line s={13}><path d="M8 0v16M0 8h16" /></Line></RightItem>
          <Spacer />
          <RightRule />
          <RightItem><Line s={14} w={1.3}><rect x=".7" y=".7" width="14.600" height="14.600" rx="2.500" /><path d="M10.700 1v14" /></Line></RightItem>
          <RightItem>
            <Line s={17} w={1}><path d="M6.700.7h2.600l.5 2.100 1.500.8 2-.7 1.500 2.300-1.500 1.600v2.400l1.500 1.600-1.500 2.300-2-.7-1.500.8-.5 2.100H6.700l-.5-2.100-1.500-.8-2 .7-1.500-2.300 1.500-1.600V6.800L1.200 5.200l1.500-2.300 2 .7 1.500-.8z" /><circle cx="8" cy="8" r="2" /></Line>
          </RightItem>
        </RightRail>
      </Body>
      <Taskbar>
        <System><App1><WindowsIcon /></App1><App1><TaskViewIcon /></App1></System>
        <Apps>{apps.map(({ Icon, state }, i) => <App1 key={i} $state={state}><Icon /></App1>)}</Apps>
        <Weather><HazeIcon /><span>26°C</span><span>Haze</span></Weather>
        {tray.map((Icon, i) => <TrayIcon key={i}><Icon /></TrayIcon>)}
        <TrayIcon $w={30}><KeyboardTray /></TrayIcon>
        <TrayText $w={38}>ENG</TrayText>
        <TrayText $w={64}>6:47 PM<br />15-Jul-23</TrayText>
        <TrayIcon $w={51}><NotificationIcon /></TrayIcon>
        <ShowDesktop />
      </Taskbar>
    </Window>
  );
}
